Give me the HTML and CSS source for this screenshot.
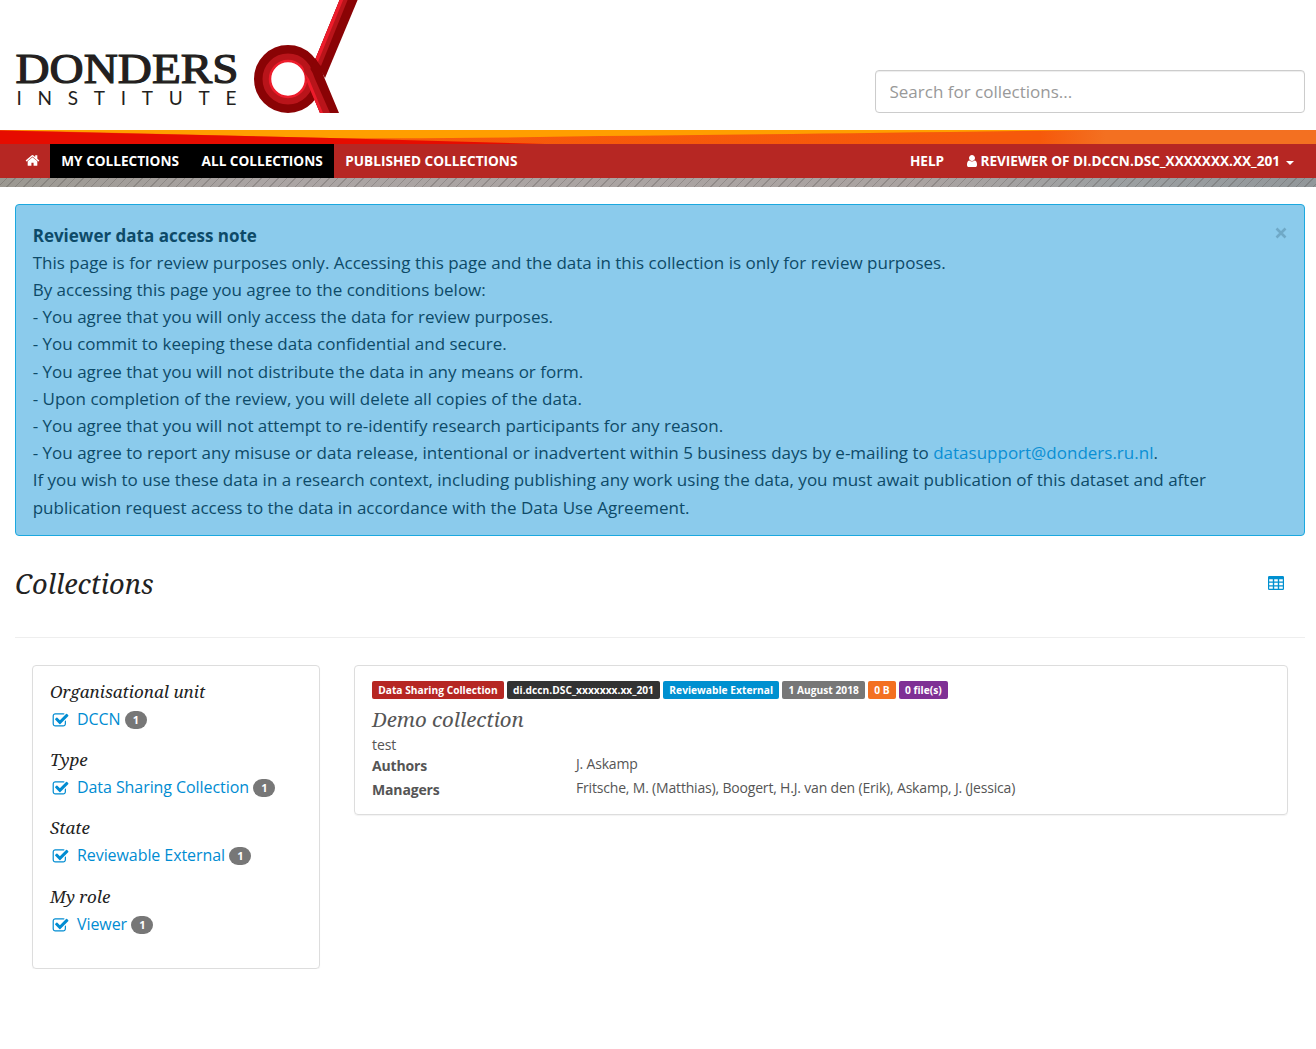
FILE: index.html
```html
<!DOCTYPE html>
<html lang="en">
<head>
<meta charset="utf-8">
<title>Collections - Donders Repository</title>
<link rel="stylesheet" href="styles.css">
</head>
<body>
<svg class="sprite" width="0" height="0">
  <symbol id="check" viewBox="0 0 1792 1792"><path d="M1472 930v318q0 119-84.500 203.500t-203.500 84.500h-832q-119 0-203.500-84.500t-84.500-203.500v-832q0-119 84.500-203.500t203.500-84.500h832q63 0 117 25 15 7 18 23 3 17-9 29l-49 49q-10 10-23 10-3 0-9-2-23-6-45-6h-832q-66 0-113 47t-47 113v832q0 66 47 113t113 47h832q66 0 113-47t47-113v-254q0-13 9-22l64-64q10-10 23-10 6 0 12 3 20 8 20 29zm231-489l-814 814q-24 24-57 24t-57-24l-430-430q-24-24-24-57t24-57l110-110q24-24 57-24t57 24l263 263 647-647q24-24 57-24t57 24l110 110q24 24 24 57t-24 57z"/></symbol>
</svg>
<header class="header">
  <svg class="logo" width="345" height="113" viewBox="0 0 345 113" role="img" aria-label="Donders Institute">
    <text class="logo-name" x="0.500" y="83" textLength="223" lengthAdjust="spacingAndGlyphs">DONDERS</text>
    <text class="logo-sub" x="1.500" y="105" textLength="220">INSTITUTE</text>
    <path d="M325 -1H343L310 78L300 60Z" fill="#8a0305"/>
    <path d="M325 -1H333L306 66L300 60Z" fill="#b9141a"/>
    <path d="M325 -1H328.500L303 62L300 60Z" fill="#ed1c2b"/>
    <circle cx="273" cy="79" r="26" fill="none" stroke="#8a0305" stroke-width="16"/>
    <circle cx="273" cy="79" r="21.500" fill="none" stroke="#b9141a" stroke-width="8"/>
    <circle cx="273" cy="79" r="18" fill="none" stroke="#ed1c2b" stroke-width="2.500"/>
    <path d="M300 58Q306 66 309 77L324 113H305L291 79Z" fill="#8a0305"/>
    <path d="M287 61Q296 66 300 79L315 113H305L291 79Z" fill="#b9141a"/>
    <path d="M290 73Q291 81 294 87L305 113H308L294 79Z" fill="#ed1c2b"/>
  </svg>
  <input class="search" type="text" placeholder="Search for collections..." aria-label="Search">
</header>
<svg class="ribbon" width="1316" height="14" viewBox="0 0 1316 14" preserveAspectRatio="none">
  <defs><linearGradient id="blend"><stop offset="0" stop-color="#f75a0a"/><stop offset=".79" stop-color="#f6590b"/><stop offset=".84" stop-color="#f37021"/><stop offset="1" stop-color="#f37021"/></linearGradient></defs>
  <rect width="1316" height="14" fill="url(#blend)"/>
  <path d="M0 0H1090Q800 4 600 6Q450 9 330 8Z" fill="#ff9e00"/>
  <path d="M0 .500L330 8L545 14H0Z" fill="#e60c00"/>
</svg>
<nav class="nav">
  <a class="home" href="#" aria-label="Home"><svg width="15" height="15" viewBox="0 0 1792 1792"><path d="M1472 992v480q0 26-19 45t-45 19h-384v-384h-256v384h-384q-26 0-45-19t-19-45v-480q0-1 .5-3t.5-3l575-474 575 474q1 2 1 6zm223-69l-62 74q-8 9-21 11h-3q-13 0-21-7l-692-577-692 577q-12 8-24 7-13-2-21-11l-62-74q-8-10-7-23.500t11-21.500l719-599q32-26 76-26t76 26l244 204v-195q0-14 9-23t23-9h192q14 0 23 9t9 23v408l219 182q10 8 11 21.500t-7 23.500z"/></svg></a>
  <a class="active" href="#">MY COLLECTIONS</a>
  <a class="active" href="#">ALL COLLECTIONS</a>
  <a href="#">PUBLISHED COLLECTIONS</a>
  <a class="help" href="#">HELP</a>
  <a class="user" href="#"><svg width="14" height="14" viewBox="128 0 1536 1792"><path d="M1536 1399q0 109-62.500 187t-150.500 78h-854q-88 0-150.500-78t-62.500-187q0-85 8.500-160.500t31.500-152 58.500-131 94-89 134.500-34.500q131 128 313 128t313-128q76 0 134.500 34.500t94 89 58.500 131 31.500 152 8.500 160.500zm-256-887q0 159-112.500 271.500t-271.500 112.500-271.500-112.500-112.500-271.500 112.500-271.500 271.500-112.500 271.500 112.500 112.500 271.500z"/></svg><span>REVIEWER OF DI.DCCN.DSC_XXXXXXX.XX_201</span><i class="caret"></i></a>
</nav>
<div class="texture"></div>
<main class="main">
  <section class="note">
    <button class="close" aria-label="Close"><svg width="12" height="12" viewBox="0 0 12 12"><path d="M1.500 1.500L10.500 10.500M10.500 1.500L1.500 10.500"/></svg></button>
    <strong>Reviewer data access note</strong><br>
    This page is for review purposes only. Accessing this page and the data in this collection is only for review purposes.<br>
    By accessing this page you agree to the conditions below:<br>
    - You agree that you will only access the data for review purposes.<br>
    - You commit to keeping these data confidential and secure.<br>
    - You agree that you will not distribute the data in any means or form.<br>
    - Upon completion of the review, you will delete all copies of the data.<br>
    - You agree that you will not attempt to re-identify research participants for any reason.<br>
    - You agree to report any misuse or data release, intentional or inadvertent within 5 business days by e-mailing to <a href="#">datasupport@donders.ru.nl</a>.<br>
    If you wish to use these data in a research context, including publishing any work using the data, you must await publication of this dataset and after<br>
    publication request access to the data in accordance with the Data Use Agreement.
  </section>
  <div class="title">
    <h1>Collections</h1>
    <svg class="grid-icon" width="16" height="14" viewBox="0 0 16 14"><path fill-rule="evenodd" d="M1.300 0H14.700Q16 0 16 1.300V12.700Q16 14 14.700 14H1.300Q0 14 0 12.700V1.300Q0 0 1.300 0ZM1.200 3.300V5.500H4.800V3.300ZM6.200 3.300V5.500H9.800V3.300ZM11.200 3.300V5.500H14.800V3.300ZM1.200 6.700V9.200H4.800V6.700ZM6.200 6.700V9.200H9.800V6.700ZM11.200 6.700V9.200H14.800V6.700ZM1.200 10.400V12.700H4.800V10.400ZM6.200 10.400V12.700H9.800V10.400ZM11.200 10.400V12.700H14.800V10.400Z"/></svg>
  </div>
  <div class="content">
    <aside class="filters">
      <h2>Organisational unit</h2>
      <a href="#"><svg width="17" height="17"><use href="#check"/></svg><span>DCCN</span><b>1</b></a>
      <h2>Type</h2>
      <a href="#"><svg width="17" height="17"><use href="#check"/></svg><span>Data Sharing Collection</span><b>1</b></a>
      <h2>State</h2>
      <a class="last-gap" href="#"><svg width="17" height="17"><use href="#check"/></svg><span>Reviewable External</span><b>1</b></a>
      <h2>My role</h2>
      <a href="#"><svg width="17" height="17"><use href="#check"/></svg><span>Viewer</span><b>1</b></a>
    </aside>
    <article class="card">
      <div class="labels">
        <span class="red">Data Sharing Collection</span><span class="dark">di.dccn.DSC_xxxxxxx.xx_201</span><span class="blue">Reviewable External</span><span class="gray">1 August 2018</span><span class="orange">0 B</span><span class="purple">0 file(s)</span>
      </div>
      <h3>Demo collection</h3>
      <p>test</p>
      <dl>
        <dt>Authors</dt><dd>J. Askamp</dd>
        <dt>Managers</dt><dd>Fritsche, M. (Matthias), Boogert, H.J. van den (Erik), Askamp, J. (Jessica)</dd>
      </dl>
    </article>
  </div>
</main>
</body>
</html>
```
FILE: styles.css
```css
* { box-sizing: border-box; }
body { margin: 0; background: #fff; color: #222; font: 17px/27.2px "Open Sans", sans-serif; }
a { color: #008cd2; text-decoration: none; }
h1, h2, h3 { margin: 0; font-family: "Noto Serif", "Droid Serif", "DejaVu Serif Condensed", "DejaVu Serif", serif; font-style: italic; font-weight: 400; font-stretch: condensed; color: #222; }
.sprite { position: absolute; }
.header { height: 130px; padding: 0 11px 0 15px; display: flex; justify-content: space-between; align-items: flex-start; }
.logo { display: block; }
.logo-name { font: 43px "Liberation Serif", serif; fill: #231f20; stroke: #231f20; stroke-width: 1.2px; }
.logo-sub { font: 19px Lato, sans-serif; fill: #231f20; }
.search { width: 430px; height: 43px; margin-top: 70px; padding: 0 13.5px; border: 1px solid #ccc; border-radius: 4px; box-shadow: inset 0 1px 1px rgba(0,0,0,.075); font: 17px "Open Sans", sans-serif; }
.search::placeholder { color: #999; opacity: 1; }
.ribbon { display: block; }
.nav { height: 34px; padding: 0 11px 0 15px; display: flex; background: #b62723; font-size: 13.6px; font-weight: 700; line-height: 34px; }
.nav a { padding: 0 11.3px; color: #fff; white-space: nowrap; }
.nav svg { fill: #fff; }
.nav .active { background: #000; }
.nav .home { width: 35px; padding: 9px 0 0 10px; line-height: 0; }
.nav .help { margin-left: auto; }
.nav .user { display: flex; align-items: center; padding-right: 11px; padding-left: 10px; }
.nav .user svg { margin-right: 1px; }
.caret { margin: 3px 0 0 6px; border: 4px solid transparent; border-top-color: #fff; border-bottom: 0; }
.texture { height: 9px; background: repeating-linear-gradient(135deg, transparent 0 4.4px, rgba(80,75,72,.28) 4.4px 5.4px, transparent 5.4px 6px), linear-gradient(90deg, #9b9891, #aba5a4 20%, #aaa3a1 70%, #9ca0a2 85%, #92979a); }
.main { padding: 17px 11px 0 15px; }
.note { position: relative; height: 332px; padding: 16.6px 17px 0 16.7px; border: 1px solid #1ba8df; border-radius: 4px; background: #8bcbec; color: #0d4a68; white-space: nowrap; }
.note a { color: #0a8fd4; }
.close { position: absolute; right: 17px; top: 22px; width: 12px; height: 12px; padding: 0; border: 0; background: none; line-height: 0; }
.close path { stroke: #6fa9c7; stroke-width: 2.6; }
.title { height: 102px; padding: 30px 21px 0 0; border-bottom: 1px solid #eee; display: flex; justify-content: space-between; }
h1 { font-size: 27.2px; line-height: 36px; }
.grid-icon { margin-top: 10px; fill: #0090d0; }
.content { padding: 27px 17px 0; display: flex; gap: 34px; align-items: flex-start; }
.filters, .card { border: 1px solid #ddd; border-radius: 4px; box-shadow: 0 1px 1px rgba(0,0,0,.05); }
.filters { width: 288px; height: 304px; padding: 12px 17px; }
h2 { font-size: 17px; line-height: 27px; }
.filters a { display: flex; align-items: center; height: 27px; margin: 1px 0 13px; padding: 1px 0 0 1.5px; font-size: 16px; letter-spacing: -.07px; white-space: nowrap; }
.filters .last-gap { margin-bottom: 14px; }
.filters a svg { fill: #008cd2; margin-right: 8.5px; }
.filters b { width: 22px; height: 18px; margin-left: 4.4px; border-radius: 9px; background: #777; color: #fff; font-size: 11px; line-height: 18px; text-align: center; }
.card { width: 934px; height: 150px; padding: 15px 17px; color: #555; font-size: 14px; }
.labels { display: flex; gap: 3px; }
.labels span { height: 18px; padding: 0 6.2px; border-radius: 2px; color: #fff; font-size: 10.2px; font-weight: 700; line-height: 19px; white-space: nowrap; letter-spacing: .02px; }
.red { background: #b62723; }
.dark { background: #333; }
.blue { background: #0090d0; }
.gray { background: #777; }
.orange { background: #f37021; }
.purple { background: #7f3095; }
h3 { margin-top: 8px; font-size: 20.4px; line-height: 25px; color: #555; }
.card p { margin: 1px 0 0; line-height: 24px; letter-spacing: -.1px; }
.card dl { margin: -3px 0 0; display: grid; grid-template-columns: 204px 1fr; grid-auto-rows: 24px; line-height: 24px; }
.card dt { padding-top: 1px; line-height: 22px; font-weight: 700; letter-spacing: -.15px; }
.card dd { margin: -2px 0 0; letter-spacing: -.18px; }
```
